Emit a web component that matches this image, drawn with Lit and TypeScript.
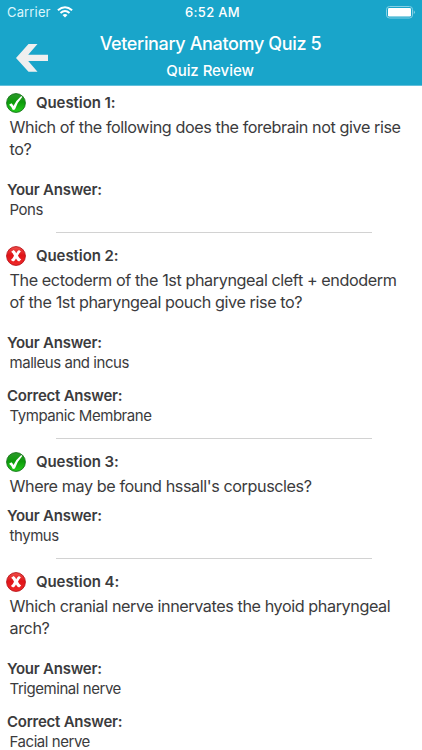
import { LitElement, html, css, svg, nothing } from "lit";
import { customElement, property } from "lit/decorators.js";

interface Review {
  lines: string[];
  answer: string;
  correct?: string;
}

const REVIEWS: Review[] = [
  { lines: ["Which of the following does the forebrain not give rise", "to?"], answer: "Pons" },
  {
    lines: ["The ectoderm of the 1st pharyngeal cleft + endoderm", "of the 1st pharyngeal pouch give rise to?"],
    answer: "malleus and incus",
    correct: "Tympanic Membrane",
  },
  { lines: ["Where may be found hssall's corpuscles?"], answer: "thymus" },
  {
    lines: ["Which cranial nerve innervates the hyoid pharyngeal", "arch?"],
    answer: "Trigeminal nerve",
    correct: "Facial nerve",
  },
];

@customElement("result-badge")
class ResultBadge extends LitElement {
  @property({ type: Boolean }) wrong = false;

  static styles = css`
    :host { display: block; width: 20px; height: 20px; }
    svg { display: block; }
  `;

  render() {
    const top = this.wrong ? "#f0504c" : "#2e9a2c";
    const mid = this.wrong ? "#e01418" : "#0c9a0a";
    const low = this.wrong ? "#f02a2a" : "#25cf1c";
    const rim = this.wrong ? "#b81218" : "#14701a";
    return html`<svg width="20" height="20" viewBox="0 0 20 20">
      <defs>
        <linearGradient id="g" x1="0" y1="0" x2="0" y2="1">
          <stop offset="0" stop-color=${top} />
          <stop offset="0.45" stop-color=${mid} />
          <stop offset="1" stop-color=${low} />
        </linearGradient>
      </defs>
      <circle cx="10" cy="10" r="9.4" fill="url(#g)" stroke=${rim} stroke-width="0.9" />
      ${this.wrong
        ? svg`<path d="M5.2 5.8 L7.6 4 Q9.3 5 10.2 7.2 Q11.2 5.2 13 4.1 L14.9 5.4 Q12.9 7.2 12 9.7 Q13 12 15.2 13.4 L13.1 15.5 Q11 14.6 10 12.4 Q9 14.6 7.1 15.6 L4.9 14 Q7.2 12.2 8 9.8 Q7.1 7.4 5.2 5.8Z" fill="#fff" />`
        : svg`<path d="M3.1 11.8 L5.4 10.2 Q6.8 11.3 7.5 13 Q10.2 7.2 15.3 3 L16.3 3.9 Q11.2 9.3 8.9 16.5 L6.9 17 Q5.5 13.7 3.1 11.8Z" fill="#fff" />`}
    </svg>`;
  }
}

@customElement("review-item")
class ReviewItem extends LitElement {
  @property({ type: Number }) number = 1;
  @property({ attribute: false }) review!: Review;

  static styles = css`
    :host { display: block; color: #3b3b3d; }
    .heading { display: flex; align-items: center; gap: 10px; height: 20px; padding: 7px 0 0 6px; }
    .label { font-size: 15px; font-weight: 600; line-height: 20px; white-space: nowrap; letter-spacing: -0.24px; }
    .heading .label { letter-spacing: -0.08px; }
    .question { margin: 3px 0 0 9.5px; font-size: 16.2px; line-height: 22px; letter-spacing: -0.42px; white-space: nowrap; }
    .group { margin: 20px 0 0 7px; }
    .short { margin-top: 9px; }
    .next { margin-top: 13px; }
    .value { padding: 2px 0 2px 2.5px; font-size: 15px; line-height: 16px; letter-spacing: -0.45px; white-space: nowrap; }
  `;

  render() {
    const { lines, answer, correct } = this.review;
    return html`
      <div class="heading">
        <result-badge ?wrong=${correct !== undefined}></result-badge>
        <span class="label">Question ${this.number}:</span>
      </div>
      <div class="question">${lines.map((line) => html`<div>${line}</div>`)}</div>
      <div class="group ${lines.length === 1 ? "short" : ""}">
        <div class="label">Your Answer:</div>
        <div class="value">${answer}</div>
      </div>
      ${correct === undefined
        ? nothing
        : html`<div class="group next">
            <div class="label">Correct Answer:</div>
            <div class="value">${correct}</div>
          </div>`}
    `;
  }
}

@customElement("app-root")
class AppRoot extends LitElement {
  static styles = css`
    :host {
      display: block;
      height: 750px;
      overflow: hidden;
      background: #fff;
      font-family: Inter, "Liberation Sans", sans-serif;
    }
    .top { box-sizing: border-box; height: 86px; background: #19a5ca; border-bottom: 1px solid #62bfdb; color: #fff; }
    .status { display: grid; grid-template-columns: 1fr auto 1fr; align-items: center; height: 24px; padding: 0 7px; font-size: 13px; line-height: 24px; }
    .carrier { display: flex; align-items: center; gap: 6px; color: #dcf6fc; letter-spacing: 0.15px; }
    .time { font-weight: 500; letter-spacing: 0.3px; padding-left: 3px; }
    .battery { justify-self: end; display: block; }
    .bar { display: grid; grid-template-columns: 50px 1fr 50px; height: 61px; }
    .back { display: block; margin: 19px 0 0 15px; }
    .titles { text-align: center; font-weight: 500; white-space: nowrap; }
    .title { margin-top: 8px; margin-right: 1px; font-size: 18px; line-height: 24px; letter-spacing: -0.36px; }
    .subtitle { margin-top: 5px; margin-right: 2px; font-size: 15px; line-height: 20px; letter-spacing: -0.05px; }
    .list { display: flex; flex-direction: column; }
    .rule { height: 1px; margin: 12px 50px 6px 56px; background: #d2d2d2; }
  `;

  render() {
    return html`
      <header class="top">
        <div class="status">
          <div class="carrier">
            <span>Carrier</span>
            <svg width="16" height="12" viewBox="0 0 16 12" fill="none" stroke="#fff" stroke-width="2">
              <path d="M0.9 4.3 Q8 -1.9 15.1 4.3" />
              <path d="M3.5 7 Q8 3.1 12.5 7" />
              <path d="M5.5 9 Q8 7 10.5 9 L8 11.5Z" fill="#fff" stroke="none" />
            </svg>
          </div>
          <div class="time">6:52 AM</div>
          <svg class="battery" width="29" height="13" viewBox="0 0 29 13">
            <rect x="0.5" y="0.5" width="26" height="11.5" rx="3" fill="none" stroke="#85d0e5" />
            <rect x="2" y="2" width="23" height="8.5" rx="1.3" fill="#fff" />
            <path d="M27.8 4.2 Q29.6 6.2 27.8 8.3Z" fill="#a3dcea" />
          </svg>
        </div>
        <div class="bar">
          <svg class="back" width="34" height="30" viewBox="0 0 34 30">
            <path d="M1 15 L13.5 1 H22.5 L13.2 11.8 H33 V18 H13.2 L22.5 28.8 H13.5Z" fill="#efefef" />
          </svg>
          <div class="titles">
            <div class="title">Veterinary Anatomy Quiz 5</div>
            <div class="subtitle">Quiz Review</div>
          </div>
        </div>
      </header>
      <main class="list">
        ${REVIEWS.map(
          (review, i) => html`
            ${i ? html`<div class="rule"></div>` : nothing}
            <review-item .number=${i + 1} .review=${review}></review-item>
          `,
        )}
      </main>
    `;
  }
}
